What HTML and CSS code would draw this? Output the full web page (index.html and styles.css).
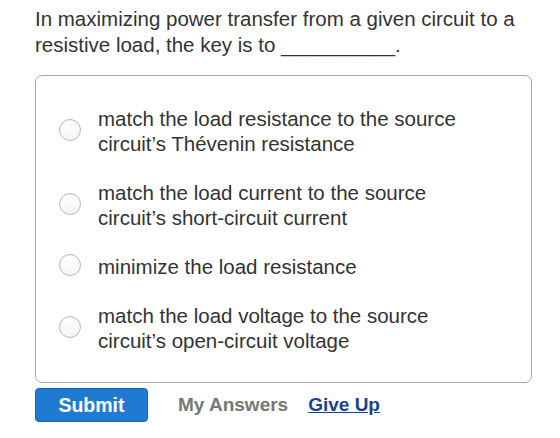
FILE: index.html
```html
<!DOCTYPE html>
<html lang="en">
<head>
<meta charset="utf-8">
<title>Question</title>
<link rel="stylesheet" href="styles.css">
</head>
<body>
<div class="page">
  <p class="question">In maximizing power transfer from a given circuit to a resistive load, the key is to __________.</p>
  <div class="choices">
    <label class="choice">
      <span class="radio"></span>
      <span class="choice-text">match the load resistance to the source circuit’s Thévenin resistance</span>
    </label>
    <label class="choice">
      <span class="radio"></span>
      <span class="choice-text">match the load current to the source circuit’s short-circuit current</span>
    </label>
    <label class="choice">
      <span class="radio"></span>
      <span class="choice-text">minimize the load resistance</span>
    </label>
    <label class="choice">
      <span class="radio"></span>
      <span class="choice-text">match the load voltage to the source circuit’s open-circuit voltage</span>
    </label>
  </div>
  <div class="actions">
    <button class="submit" type="button">Submit</button>
    <span class="my-answers">My Answers</span>
    <a class="give-up" href="#">Give Up</a>
  </div>
</div>
</body>
</html>
```

FILE: styles.css
```css
html, body {
  margin: 0;
  padding: 0;
  background: #ffffff;
}

body {
  font-family: "Liberation Sans", Arial, sans-serif;
  color: #333333;
}

.page {
  padding: 6px 0 0 35px;
  width: 497px;
}

.question {
  margin: 0 0 17px 0;
  font-size: 20.5px;
  line-height: 26px;
  width: 495px;
}

.choices {
  border: 1px solid #a9a9a9;
  border-radius: 7px;
  padding: 30px 20px 30px 23px;
  display: flex;
  flex-direction: column;
  gap: 24px;
  height: 246px;
}

.choice {
  display: flex;
  align-items: center;
  gap: 17px;
  cursor: pointer;
}

.radio {
  flex: none;
  width: 20px;
  height: 20px;
  border: 1px solid #bababa;
  border-radius: 50%;
  background: linear-gradient(#ffffff, #f4f4f4);
  box-shadow: inset 0 1px 1px rgba(0, 0, 0, 0.05);
  margin-top: -3px;
}

.choice-text {
  font-size: 20.5px;
  line-height: 25px;
  color: #333333;
  width: 380px;
}

.actions {
  display: flex;
  align-items: center;
  margin-top: 5px;
}

.submit {
  width: 113px;
  height: 34px;
  border: 1px solid #1b62ad;
  border-radius: 4px;
  background: #1f7bd2;
  color: #ffffff;
  font-family: inherit;
  font-weight: bold;
  font-size: 19.5px;
  padding: 0;
}

.my-answers {
  margin-left: 30px;
  font-size: 19px;
  font-weight: bold;
  color: #777777;
}

.give-up {
  margin-left: 20px;
  font-size: 19px;
  font-weight: bold;
  color: #1c3f96;
  text-decoration: underline;
}
```
